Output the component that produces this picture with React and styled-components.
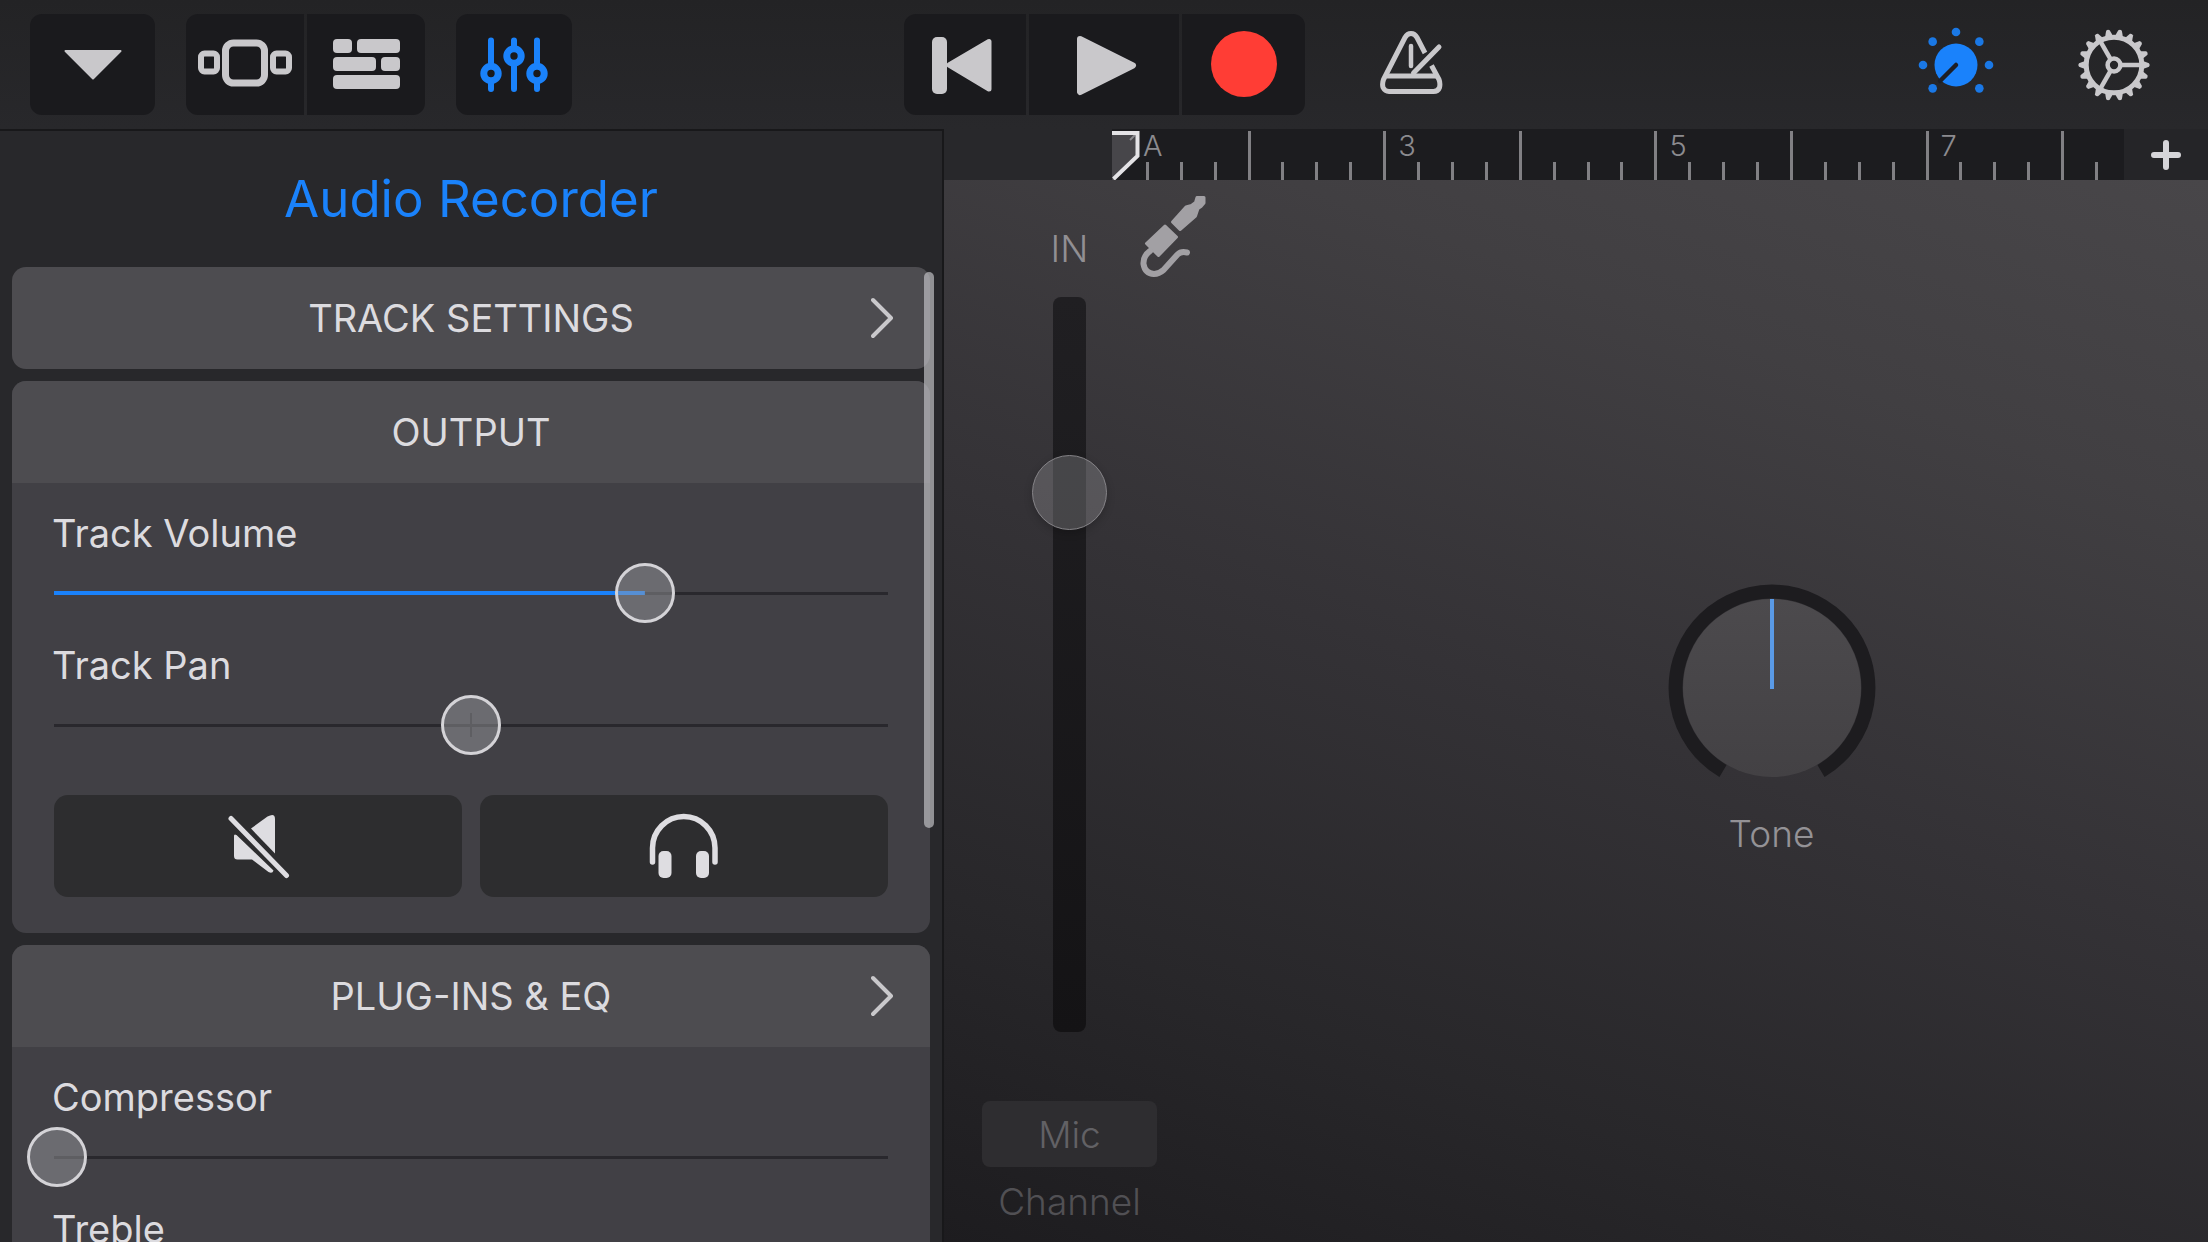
import React, { useState } from "react";
import styled, { createGlobalStyle, css } from "styled-components";

const color = {
  bar: "#252527",
  well: "#1a1a1d",
  panel: "#28282b",
  header: "#4d4c50",
  body: "#414045",
  icon: "#c9c8cb",
  text: "#dcdbdf",
  blue: "#1a82fb",
  red: "#ff3d35",
};

const GlobalStyle = createGlobalStyle`
  *, *::before, *::after { box-sizing: border-box; }
  html, body, #root { height: 100%; }
  body {
    margin: 0;
    overflow: hidden;
    background: ${color.bar};
    color: ${color.text};
    font-family: Inter, "Liberation Sans", sans-serif;
  }
  button { font: inherit; color: inherit; border: 0; padding: 0; background: none; cursor: pointer; }
  svg { display: block; flex: none; }
`;

/* ---------- frame ---------- */

const Page = styled.div`
  height: 100%;
  display: grid;
  grid-template-rows: 129px minmax(0, 1fr);
`;

const Toolbar = styled.header`
  display: grid;
  grid-template-columns: 1fr auto 1fr;
  padding: 14px 30px;
  background: linear-gradient(#232325, #28282b);
`;

const Tools = styled.div`
  display: flex;
  align-items: stretch;
  gap: 31px;
`;

const ButtonGroup = styled.div`
  display: flex;
  gap: 3px;
  border-radius: 12px;
  overflow: hidden;
`;

const ToolButton = styled.button`
  display: grid;
  place-items: center;
  width: ${(p) => p.$width}px;
  background: ${color.well};
`;

const RightTools = styled.div`
  display: flex;
  align-items: center;
  gap: 83px;
  padding: 0 27px 0 74px;
`;

const PlainButton = styled.button`
  display: grid;
  place-items: center;
  ${(p) => p.$first && css`margin-right: auto;`}
`;

const Main = styled.main`
  display: grid;
  grid-template-columns: minmax(0, 59fr) minmax(0, 79fr);
  min-height: 0;
`;

/* ---------- settings panel ---------- */

const Panel = styled.aside`
  display: flex;
  flex-direction: column;
  min-height: 0;
  background: ${color.panel};
  border: solid #18181a;
  border-width: 2px 2px 0 0;
`;

const PanelTitle = styled.h1`
  margin: 0;
  font-size: 51px;
  font-weight: 400;
  line-height: 136px;
  text-align: center;
  color: ${color.blue};
`;

const ScrollArea = styled.div`
  position: relative;
  flex: 1;
  min-height: 0;
  overflow: hidden;
`;

const CardList = styled.div`
  display: flex;
  flex-direction: column;
  gap: 12px;
  padding: 0 12px;
`;

const ScrollThumb = styled.div`
  position: absolute;
  top: 5px;
  right: 8px;
  width: 10px;
  height: 57%;
  border-radius: 5px;
  background: rgba(190, 190, 194, 0.7);
`;

const Card = styled.section`
  border-radius: 14px;
  overflow: hidden;
  background: ${color.body};
`;

const cardHeader = css`
  display: grid;
  grid-template-columns: 24px 1fr 24px;
  align-items: center;
  width: 100%;
  height: 102px;
  padding: 0 35px;
  background: ${color.header};
  font-size: 38px;
  text-align: center;
`;

const CardLink = styled.button`
  && { ${cardHeader} }
`;

const CardHeading = styled.h2`
  ${cardHeader}
  margin: 0;
  font-weight: 400;
`;

const HeadingText = styled.span`
  grid-column: 2;
`;

const CardBody = styled.div`
  display: flex;
  flex-direction: column;
  gap: 18px;
  padding: 26px 42px 36px 40px;
`;

const Field = styled.label`
  display: flex;
  flex-direction: column;
  gap: 6px;
  font-size: 38px;
  line-height: 48px;
`;

const thumb = css`
  appearance: none;
  width: 60px;
  height: 60px;
  border: 3px solid #d4d3d7;
  border-radius: 50%;
  background: rgba(160, 159, 164, 0.45);
`;

const Range = styled.input`
  --fill: calc((100% - 60px) * ${(p) => p.$fill} + 3px);
  appearance: none;
  width: auto;
  height: 60px;
  margin: 0 -27px 0 -25px;
  background:
    linear-gradient(${color.blue}, ${color.blue}) 27px center / var(--fill) 4px no-repeat,
    linear-gradient(#29282d, #29282d) center / ${(p) => (p.$centre ? "2px 24px" : "0 0")} no-repeat,
    linear-gradient(#29282d, #29282d) center / calc(100% - 54px) 3px no-repeat;
  ${(p) => !p.$fill && css`--fill: 0px;`}
  &::-webkit-slider-thumb { ${thumb} }
`;

const ButtonPair = styled.div`
  display: grid;
  grid-template-columns: 1fr 1fr;
  gap: 18px;
  margin: 22px 0 0 2px;
`;

const PadButton = styled.button`
  display: grid;
  place-items: center;
  height: 102px;
  && { background: #2d2d2f; }
  border-radius: 14px;
`;

/* ---------- instrument ---------- */

const Workspace = styled.section`
  display: grid;
  grid-template-rows: 51px minmax(0, 1fr);
  min-height: 0;
`;

const RulerRow = styled.div`
  display: grid;
  grid-template-columns: 168px minmax(0, 1fr) 84px;
  background: #28282b;
`;

const Ruler = styled.div`
  position: relative;
  grid-column: 2;
  display: flex;
  padding-top: 2px;
  background: #1c1c1f;
`;

const Measure = styled.div`
  position: relative;
  flex: 0 0 calc(100% * 0.134);
  display: grid;
  grid-template-columns: repeat(4, 1fr);
  align-items: end;
  ${(p) => p.$partial && css`
    flex: 1;
    grid-template-columns: 34px 1fr;
  `}
`;

const Tick = styled.i`
  width: 3px;
  height: ${(p) => (p.$major ? 49 : 18)}px;
  background: #818084;
`;

const MeasureLabel = styled.span`
  position: absolute;
  top: -3px;
  left: ${(p) => (p.$shifted ? 31 : 15)}px;
  font-size: 29px;
  line-height: 36px;
  font-weight: 300;
  color: #8c8b8f;
`;

const Playhead = styled.svg`
  position: absolute;
  left: 0;
  top: 2px;
`;

const AddButton = styled.button`
  display: grid;
  place-items: center;
  && { background: #252528; }
`;

const Canvas = styled.div`
  display: flex;
  min-height: 0;
  padding: 16px 0 16px 38px;
  background: linear-gradient(200deg, #484649 0%, #413f42 22%, #343236 50%, #28272a 77%, #1d1c1f 100%);
`;

const Strip = styled.div`
  display: flex;
  flex-direction: column;
  width: 175px;
  flex: none;
`;

const StripHead = styled.div`
  display: flex;
  height: 82px;
  margin-bottom: 19px;
`;

const StripLabel = styled.label`
  flex: 0 0 175px;
  align-self: flex-end;
  padding-bottom: 5px;
  font-size: 37px;
  line-height: 48px;
  font-weight: 300;
  text-align: center;
  color: #918f93;
`;

const JackIcon = styled.svg`
  margin-left: -18px;
`;

const Fader = styled.input`
  appearance: none;
  writing-mode: vertical-lr;
  direction: rtl;
  align-self: center;
  flex: 1;
  min-height: 0;
  width: 75px;
  margin: 0;
  background: none;
  &::-webkit-slider-runnable-track {
    background: linear-gradient(#201f22, #141315);
    width: 33px;
    border-radius: 8px;
  }
  &::-webkit-slider-thumb {
    appearance: none;
    width: 75px;
    height: 75px;
    margin-left: -21px;
    border: 1px solid #858387;
    border-radius: 50%;
    background: rgba(160, 158, 162, 0.32);
    box-shadow: 0 3px 8px rgba(0, 0, 0, 0.2);
  }
`;

const MicButton = styled.button`
  height: 66px;
  margin: 69px 0 11px;
  border-radius: 8px;
  && {
    background: #2e2d30;
    font-size: 37px;
    font-weight: 300;
    color: #626165;
  }
`;

const Caption = styled.span`
  font-size: 37px;
  line-height: 48px;
  font-weight: 300;
  text-align: center;
  color: ${(p) => (p.$dim ? "#515054" : "#949296")};
`;

const KnobArea = styled.div`
  flex: 1;
  display: grid;
  place-items: center;
  padding: 20px 0 0 178px;
`;

const Knob = styled.label`
  position: relative;
  display: flex;
  flex-direction: column;
  align-items: center;
  gap: 18px;
`;

const KnobInput = styled.input`
  position: absolute;
  inset: 0 0 auto;
  width: 100%;
  height: 208px;
  margin: 0;
  opacity: 0;
`;

/* ---------- icons ---------- */

const Chevron = () => (
  <svg width="24" height="42" viewBox="1 0 24 42" fill="none" stroke={color.icon} strokeWidth="4" strokeLinecap="round" strokeLinejoin="round">
    <path d="M3 3 L21 21 L3 39" />
  </svg>
);

const MenuIcon = () => (
  <svg width="60" height="32" viewBox="63 51 60 32" fill={color.icon} stroke={color.icon} strokeWidth="2" strokeLinejoin="round">
    <path d="M65.500 53 H120.500 L93 80.500 Z" />
  </svg>
);

const BrowserIcon = () => (
  <svg width="94" height="51" viewBox="0 0 94 51" fill="none" stroke={color.icon}>
    <rect x="3" y="14.500" width="16" height="18" rx="3.500" strokeWidth="6" />
    <rect x="27.500" y="4" width="39" height="40" rx="8" strokeWidth="7" />
    <rect x="75" y="14.500" width="16" height="18" rx="3.500" strokeWidth="6" />
  </svg>
);

const TracksIcon = () => (
  <svg width="67" height="51" viewBox="0 0 67 51" fill={color.icon}>
    <rect width="19" height="14" rx="4" />
    <rect x="24" width="43" height="14" rx="4" />
    <rect y="18" width="43" height="14" rx="4" />
    <rect x="48" y="18" width="19" height="14" rx="4" />
    <rect y="36" width="67" height="14" rx="4" />
  </svg>
);

const MixerIcon = () => (
  <svg width="70" height="58" viewBox="478 35 70 58" stroke={color.blue} strokeWidth="6" strokeLinecap="round">
    <path d="M490 39.500 V88 M513 39.500 V88 M536 39.500 V88" fill="none" />
    <g fill={color.well} strokeWidth="7">
      <circle cx="490" cy="72.500" r="7.200" />
      <circle cx="513" cy="55" r="7.200" />
      <circle cx="536" cy="72.500" r="7.200" />
    </g>
  </svg>
);

const RewindIcon = () => (
  <svg width="70" height="60" viewBox="930 34 70 60" fill={color.icon}>
    <rect x="932" y="36" width="15" height="57" rx="5" />
    <path d="M949 64 L989 40.500 V88 Z" stroke={color.icon} strokeWidth="5" strokeLinejoin="round" />
  </svg>
);

const PlayIcon = () => (
  <svg width="68" height="62" viewBox="1070 33 68 62" fill={color.icon}>
    <path d="M1080 38 L1133 64.500 L1080 91 Z" stroke={color.icon} strokeWidth="6" strokeLinejoin="round" />
  </svg>
);

const RecordIcon = () => (
  <svg width="67" height="67" viewBox="0 0 67 67">
    <circle cx="34" cy="33" r="33" fill={color.red} />
  </svg>
);

const MetronomeIcon = () => (
  <svg width="64" height="67" viewBox="1379 31 64 67" fill="none" stroke={color.icon} strokeWidth="5" strokeLinecap="round" strokeLinejoin="round">
    <path strokeLinecap="butt" d="M1425 53 L1417 37.500 Q1414.800 33.500 1411 33.500 Q1407.200 33.500 1405 37.500 L1383.500 79.500 Q1382 83.500 1383 87.500 Q1385 91.500 1389 91.500 H1433.500 Q1438 91.500 1439.500 87.500 Q1440.500 83.500 1439 79.500 L1431.500 65.500" />
    <path d="M1387 76 H1436" strokeLinecap="butt" />
    <path d="M1411 46 V66" strokeWidth="4.500" />
    <path d="M1413.500 73 L1439 47" />
  </svg>
);

const DOTS = [135, 180, 225, 270, 315, 0, 45];

const KnobIcon = () => (
  <svg width="76" height="76" viewBox="-38 -38 76 76" fill={color.blue}>
    <circle r="21.500" />
    <path d="M0 0 L-16 16" stroke="#1d1f26" strokeWidth="4.500" strokeLinecap="round" />
    {DOTS.map((a) => (
      <circle key={a} r="4.300" cx="33" transform={`rotate(${a})`} opacity="0.9" />
    ))}
  </svg>
);

const GearIcon = () => (
  <svg width="74" height="74" viewBox="-37 -37 74 74" fill="none" stroke={color.icon} strokeWidth="4.500">
    <circle r="27.800" strokeWidth="5" />
    <circle r="6.400" />
    {[0, 120, 240].map((a) => (
      <path key={a} d="M7.500 0 H27" transform={`rotate(${a})`} />
    ))}
    {Array.from({ length: 18 }, (_, i) => (
      <path key={i} d="M29 -4 L35 -1.800 Q36.500 0 35 1.800 L29 4 Z" fill={color.icon} stroke="none" transform={`rotate(${i * 20})`} />
    ))}
  </svg>
);

const PlusIcon = () => (
  <svg width="32" height="32" viewBox="0 0 32 32" stroke="#d6d5d9" strokeWidth="6" strokeLinecap="round">
    <path d="M4 16 H28 M16 4 V28" />
  </svg>
);

const MuteIcon = () => (
  <svg width="64" height="66" viewBox="227 814 64 66" fill="#dedde1">
    <path d="M252 829.500 L268.500 817.600 Q276 813.500 276 820 V854.500 Z" />
    <path d="M235 837 Q235 834.500 237.500 836 L274.500 871.500 Q273.500 875 269.500 873 L253 860.500 H238.500 Q235 860.500 235 857 Z" />
    <path d="M232 819.500 L287.500 876.500" stroke="#dedde1" strokeWidth="5" strokeLinecap="round" />
  </svg>
);

const HeadphonesIcon = () => (
  <svg width="70" height="66" viewBox="648 814 70 66">
    <path d="M651.500 863 V849 A31.200 31.500 0 0 1 714 849 V863" fill="none" stroke="#dedde1" strokeWidth="5.500" strokeLinecap="round" />
    <rect x="657.500" y="852" width="13" height="27" rx="5" fill="#dedde1" />
    <rect x="695" y="852" width="13" height="27" rx="5" fill="#dedde1" />
  </svg>
);

const Jack = () => (
  <JackIcon width="67" height="82" viewBox="1139 196 67 82" fill="#a2a0a4" stroke="#a2a0a4" strokeLinejoin="round" strokeLinecap="round" aria-hidden="true">
    <path strokeWidth="3" d="M1197 197.500 H1204 V203 L1201 206.500 L1198 208.500 L1195.500 216 L1180 229.500 L1172.500 222 L1186 207 L1191.500 205.500 L1195.500 202.500 Z" />
    <path strokeWidth="3" d="M1165 226 L1176.500 237 L1158.500 255.500 L1146.500 243.500 Z" />
    <path strokeWidth="6" fill="none" d="M1150 251 Q1143 256 1143.500 264 Q1145 273.500 1154 274 Q1159 274 1163.500 270 L1177.500 254.500 Q1181 251 1187 252.500" />
  </JackIcon>
);

const KnobDial = ({ value }) => (
  <svg width="208" height="208" viewBox="-104 -104 208 208">
    <defs>
      <linearGradient id="dial" x1="0" y1="0" x2="0" y2="1">
        <stop offset="0" stopColor="#4c4a4d" />
        <stop offset="1" stopColor="#434144" />
      </linearGradient>
    </defs>
    <circle r="89" fill="url(#dial)" />
    <path d="M-49 83 A96.400 96.400 0 1 1 49 83" fill="none" stroke="#1d1c1f" strokeWidth="14" />
    <path d="M0 1 V-89" stroke="#5a9ae6" strokeWidth="4" transform={`rotate(${(value - 50) * 3})`} />
  </svg>
);

/* ---------- parts ---------- */

function SliderField({ label, initial, filled, centre }) {
  const [value, setValue] = useState(initial);
  return (
    <Field>
      {label}
      <Range
        type="range"
        value={value}
        onChange={(e) => setValue(Number(e.target.value))}
        $fill={filled ? value / 100 : 0}
        $centre={centre}
      />
    </Field>
  );
}

const MEASURES = ["", "", "3", "", "5", "", "7"];

export default function App() {
  const [input, setInput] = useState(76);
  const [tone, setTone] = useState(50);

  return (
    <>
      <GlobalStyle />
      <Page>
        <Toolbar>
          <Tools>
            <ButtonGroup>
              <ToolButton $width={125} aria-label="Menu"><MenuIcon /></ToolButton>
            </ButtonGroup>
            <ButtonGroup>
              <ToolButton $width={118} aria-label="Sound browser"><BrowserIcon /></ToolButton>
              <ToolButton $width={118} aria-label="Tracks"><TracksIcon /></ToolButton>
            </ButtonGroup>
            <ButtonGroup>
              <ToolButton $width={116} aria-label="Track controls"><MixerIcon /></ToolButton>
            </ButtonGroup>
          </Tools>
          <ButtonGroup>
            <ToolButton $width={122} aria-label="Go to beginning"><RewindIcon /></ToolButton>
            <ToolButton $width={150} aria-label="Play"><PlayIcon /></ToolButton>
            <ToolButton $width={123} aria-label="Record"><RecordIcon /></ToolButton>
          </ButtonGroup>
          <RightTools>
            <PlainButton $first aria-label="Metronome"><MetronomeIcon /></PlainButton>
            <PlainButton aria-label="Instrument controls"><KnobIcon /></PlainButton>
            <PlainButton aria-label="Settings"><GearIcon /></PlainButton>
          </RightTools>
        </Toolbar>

        <Main>
          <Panel>
            <PanelTitle>Audio Recorder</PanelTitle>
            <ScrollArea>
              <CardList>
                <Card>
                  <CardLink>
                    <HeadingText>TRACK SETTINGS</HeadingText>
                    <Chevron />
                  </CardLink>
                </Card>
                <Card>
                  <CardHeading><HeadingText>OUTPUT</HeadingText></CardHeading>
                  <CardBody>
                    <SliderField label="Track Volume" initial={71} filled />
                    <SliderField label="Track Pan" initial={50} centre />
                    <ButtonPair>
                      <PadButton aria-label="Mute"><MuteIcon /></PadButton>
                      <PadButton aria-label="Solo"><HeadphonesIcon /></PadButton>
                    </ButtonPair>
                  </CardBody>
                </Card>
                <Card>
                  <CardLink>
                    <HeadingText>PLUG-INS &amp; EQ</HeadingText>
                    <Chevron />
                  </CardLink>
                  <CardBody>
                    <SliderField label="Compressor" initial={0} />
                    <SliderField label="Treble" initial={50} centre />
                  </CardBody>
                </Card>
              </CardList>
              <ScrollThumb />
            </ScrollArea>
          </Panel>

          <Workspace>
            <RulerRow>
              <Ruler>
                {MEASURES.map((label, i) => (
                  <Measure key={i}>
                    <Tick $major />
                    <Tick />
                    <Tick />
                    <Tick />
                    {i === 0 && <MeasureLabel $shifted>A</MeasureLabel>}
                    {label && <MeasureLabel>{label}</MeasureLabel>}
                  </Measure>
                ))}
                <Measure $partial>
                  <Tick $major />
                  <Tick />
                </Measure>
                <Playhead width="28" height="49" viewBox="0 0 28 49" aria-hidden="true">
                  <path d="M0 2 H25.500 V25 L1 49 L0 49 Z" fill="#47464a" />
                  <path d="M18 9 L23 4" stroke="#8a898d" strokeWidth="2" />
                  <path d="M0 2 H25.500 V25 L1.500 48" fill="none" stroke="#e4e3e6" strokeWidth="4" />
                </Playhead>
              </Ruler>
              <AddButton aria-label="Add section"><PlusIcon /></AddButton>
            </RulerRow>

            <Canvas>
              <Strip>
                <StripHead>
                  <StripLabel htmlFor="input-level">IN</StripLabel>
                  <Jack />
                </StripHead>
                <Fader
                  id="input-level"
                  type="range"
                  value={input}
                  onChange={(e) => setInput(Number(e.target.value))}
                />
                <MicButton aria-describedby="channel-caption">Mic</MicButton>
                <Caption id="channel-caption" $dim>Channel</Caption>
              </Strip>
              <KnobArea>
                <Knob>
                  <KnobDial value={tone} />
                  <KnobInput type="range" value={tone} onChange={(e) => setTone(Number(e.target.value))} />
                  <Caption>Tone</Caption>
                </Knob>
              </KnobArea>
            </Canvas>
          </Workspace>
        </Main>
      </Page>
    </>
  );
}
